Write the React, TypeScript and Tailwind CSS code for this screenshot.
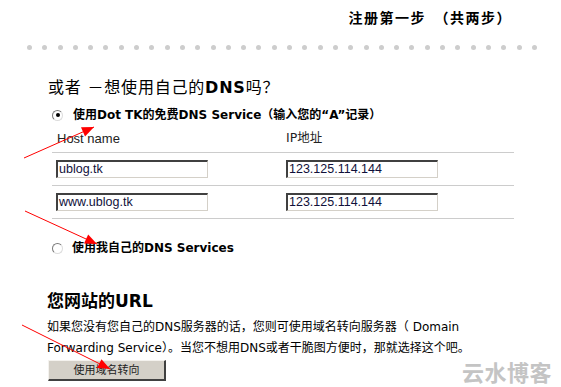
import React from "react";

const cjk = "font-['DejaVu_Sans','Noto_Sans_CJK_SC',sans-serif]";

const dots = Array.from({ length: 34 }, (_, i) => i);

const arrows = [
  { x1: 24, y1: 158, x2: 94, y2: 127 },
  { x1: 25, y1: 211, x2: 97, y2: 244 },
  { x1: 22, y1: 325, x2: 110, y2: 369 },
];

function headPoints(a: { x1: number; y1: number; x2: number; y2: number }) {
  const dx = a.x2 - a.x1;
  const dy = a.y2 - a.y1;
  const len = Math.hypot(dx, dy);
  const ux = dx / len;
  const uy = dy / len;
  const bx = a.x2 - ux * 12;
  const by = a.y2 - uy * 12;
  const px = -uy * 5;
  const py = ux * 5;
  return `${a.x2},${a.y2} ${bx + px},${by + py} ${bx - px},${by - py}`;
}

const Radio: React.FC<{ checked?: boolean }> = ({ checked }) => (
  <span className="w-[11px] h-[11px] rounded-full border border-t-[#7a7a7a] border-l-[#7a7a7a] border-b-[#dcdcdc] border-r-[#dcdcdc] bg-white flex items-center justify-center shrink-0">
    {checked && <span className="w-[4px] h-[4px] rounded-full bg-black" />}
  </span>
);

const Field: React.FC<{ value: string }> = ({ value }) => (
  <div className="w-[152px] h-[18px] border-t-2 border-l-2 border-t-[#404040] border-l-[#404040] border-b border-r border-b-[#d4d0c8] border-r-[#d4d0c8] bg-white flex items-center pl-[1px] font-['Liberation_Sans',sans-serif] text-[12.5px] text-[#10103a] leading-none">
    {value}
  </div>
);

const rows = [
  { host: "ublog.tk", ip: "123.125.114.144" },
  { host: "www.ublog.tk", ip: "123.125.114.144" },
];

export default function App() {
  return (
    <div className={`relative w-[561px] h-[387px] bg-white overflow-hidden text-black ${cjk}`}>
      {/* step title */}
      <div className="h-[36px] flex items-center justify-end pr-[49px] text-[14px] font-bold tracking-[1.5px] whitespace-nowrap">
        注册第一步　（共两步）
      </div>

      {/* dotted separator */}
      <div className="h-[22px] flex items-center gap-[10.3px] pl-[27px]">
        {dots.map((d) => (
          <span key={d} className="w-[5px] h-[5px] rounded-full bg-[#cdcdcd]" />
        ))}
      </div>

      <div className="mt-[18px] h-[24px] leading-[24px] pl-[48px] text-[16px] tracking-[0.8px] whitespace-nowrap">
        或者 －想使用自己的<span className="font-bold">DNS</span>吗？
      </div>

      <div className="mt-[5px] h-[20px] flex items-center pl-[52px] gap-[10px] text-[12px] font-bold whitespace-nowrap">
        <Radio checked />
        <span>使用Dot TK的免费DNS Service（输入您的“A”记录）</span>
      </div>

      {/* host table */}
      <div className="ml-[52px] w-[462px]">
        <div className="h-[28px] flex items-center border-b border-[#cccccc] font-['Liberation_Sans',sans-serif] text-[13px] text-[#222]">
          <span className="w-[234px] pl-[5px]">Host name</span>
          <span className={`${cjk} text-[12.5px]`}>IP地址</span>
        </div>
        {rows.map((r, i) => (
          <div key={i} className="h-[33px] flex items-center border-b border-[#cccccc]">
            <div className="w-[234px] pl-[4px]">
              <Field value={r.host} />
            </div>
            <Field value={r.ip} />
          </div>
        ))}
      </div>

      <div className="mt-[19px] h-[20px] flex items-center pl-[52px] gap-[9px] text-[12px] font-bold whitespace-nowrap">
        <Radio />
        <span>使用我自己的DNS Services</span>
      </div>

      <div className="mt-[31px] h-[24px] leading-[24px] pl-[47px] text-[17px] font-bold whitespace-nowrap">
        您网站的URL
      </div>

      <p className="mt-[4px] pl-[47px] text-[12px] leading-[21px] whitespace-nowrap">
        如果您没有您自己的DNS服务器的话，您则可使用域名转向服务器（ Domain
        <br />
        Forwarding Service）。当您不想用DNS或者干脆图方便时，那就选择这个吧。
      </p>

      <button className="ml-[48px] mt-[1px] w-[118px] h-[21px] bg-[#d4d0c8] border border-t-[#f4f2ee] border-l-[#f4f2ee] border-b-2 border-r-2 border-b-[#404040] border-r-[#404040] text-[11px] leading-none text-[#222] flex items-center justify-center">
        使用域名转向
      </button>

      {/* watermark */}
      <div className="absolute right-[9px] bottom-[5px] font-['Noto_Sans_CJK_SC',sans-serif] font-bold text-[22px] leading-[22px] text-[#c4c4c4] tracking-[0.5px]">
        云水博客
      </div>

      {/* annotation arrows */}
      <svg className="absolute inset-0 pointer-events-none" width="561" height="387">
        {arrows.map((a, i) => (
          <g key={i}>
            <line x1={a.x1} y1={a.y1} x2={a.x2} y2={a.y2} stroke="#ff0000" strokeWidth={1} />
            <polygon points={headPoints(a)} fill="#ff0000" />
          </g>
        ))}
      </svg>
    </div>
  );
}
